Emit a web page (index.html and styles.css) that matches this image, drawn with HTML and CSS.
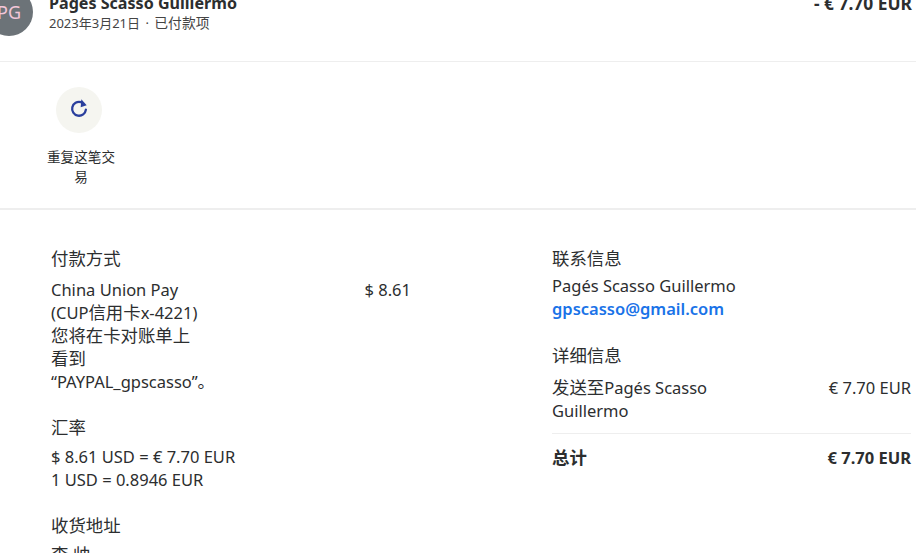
FILE: index.html
```html
<!DOCTYPE html>
<html lang="zh-CN">
  <head>
    <meta charset="UTF-8" />
    <meta name="viewport" content="width=device-width, initial-scale=1.0" />
    <title>交易详情</title>
    <link rel="stylesheet" href="styles.css">
  </head>
  <body>
    <header class="summary">
      <div class="avatar">PG</div>
      <div class="summary-text">
        <div class="payee">Pagés Scasso Guillermo</div>
        <div class="meta">2023年3月21日 <span class="dot">·</span> <span class="status">已付款项</span></div>
      </div>
      <div class="amount">- € 7.70 EUR</div>
    </header>

    <section class="actions">
      <div class="action">
        <div class="action-icon">
          <svg width="22" height="22" viewBox="0 0 22 22" fill="none">
            <path d="M17.9 10.6A6.9 6.9 0 1 1 13 3.2" stroke="#2a3f9d" stroke-width="2.3" stroke-linecap="round" />
            <path d="M13.3 0.2L18.7 6.2L12.7 8.2Z" fill="#2a3f9d" />
          </svg>
        </div>
        <div class="action-label">重复这笔交易</div>
      </div>
    </section>

    <main class="details">
      <div class="col-left">
        <h2>付款方式</h2>
        <div class="row">
          <div class="method">China Union Pay<br />(CUP<span class="zh">信用卡</span>x-4221)<br /><span class="zh">您将在卡对账单上看到</span><br />“PAYPAL_gpscasso”<span class="zh">。</span></div>
          <div>$ 8.61</div>
        </div>
        <h2 class="next">汇率</h2>
        <div>$ 8.61 USD = € 7.70 EUR<br />1 USD = 0.8946 EUR</div>
        <h2 class="next">收货地址</h2>
        <div class="zh">李 帅</div>
      </div>
      <div class="col-right">
        <h2 class="contact">联系信息</h2>
        <div>Pagés Scasso Guillermo<br /><a class="email" href="#">gpscasso@gmail.com</a></div>
        <h2 class="next">详细信息</h2>
        <div class="row line">
          <div class="sent"><span class="zh">发送至</span>Pagés Scasso Guillermo</div>
          <div>€ 7.70 EUR</div>
        </div>
        <div class="row total">
          <div class="zh">总计</div>
          <div>€ 7.70 EUR</div>
        </div>
      </div>
    </main>
  </body>
</html>
```

FILE: styles.css
```css
html,
body {
  height: 553px;
  overflow: hidden;
}

body {
  margin: 0;
  font-family: "Noto Sans", "Noto Sans CJK SC", sans-serif;
  font-size: 16.5px;
  line-height: 23px;
  color: #2c2e2f;
  background: white;
}

.zh {
  font-size: 17.4px;
}

.summary {
  display: flex;
  height: 73px;
  margin-top: -12px;
  margin-left: -15px;
  padding-right: 4px;
  border-bottom: 1px solid #eeeeee;
}

.avatar {
  width: 48px;
  height: 48px;
  border-radius: 50%;
  background: #6c7378;
  color: #f3c6d8;
  font-size: 18px;
  line-height: 48px;
  text-align: center;
  flex-shrink: 0;
}

.summary-text {
  margin-left: 16px;
  flex: 1;
}

.payee {
  padding-top: 3px;
  font-size: 16.1px;
  font-weight: 700;
  line-height: 24px;
}

.meta {
  margin-top: -3px;
  font-size: 13px;
  line-height: 22px;
  color: #444;
}

.dot {
  margin: 0 2px;
}

.status {
  font-size: 13.8px;
}

.amount {
  padding-top: 3px;
  font-size: 17.4px;
  font-weight: 700;
  line-height: 24px;
}

.actions {
  height: 146px;
  padding-left: 47px;
  border-bottom: 2px solid #eeeeee;
}

.action {
  width: 68px;
  padding-top: 25px;
  text-align: center;
}

.action-icon {
  display: flex;
  align-items: center;
  justify-content: center;
  width: 46px;
  height: 46px;
  margin: 0 0 14px 9px;
  border-radius: 50%;
  background: #f5f5f0;
}

.action-label {
  font-size: 13.6px;
  line-height: 20px;
}

.details {
  display: flex;
  padding: 36px 5px 0 51px;
}

.details h2 {
  margin: 0 0 8px;
  font-size: 17.4px;
  font-weight: 400;
  line-height: 24px;
}

.details h2.contact {
  margin-bottom: 4px;
}

.details h2.next {
  margin-top: 22px;
  margin-bottom: 6px;
}

.col-left {
  width: 360px;
  margin-right: 141px;
}

.col-right {
  flex: 1;
}

.col-right h2.next {
  margin-top: 23px;
  margin-bottom: 9px;
}

.row {
  display: flex;
  justify-content: space-between;
}

.method {
  width: 150px;
}

.email {
  color: #1a73e8;
  font-weight: 600;
  text-decoration: none;
}

.sent {
  width: 180px;
}

.line {
  padding-bottom: 11px;
  border-bottom: 1px solid #eeeeee;
}

.total {
  margin-top: 12px;
  font-weight: 700;
}
```
